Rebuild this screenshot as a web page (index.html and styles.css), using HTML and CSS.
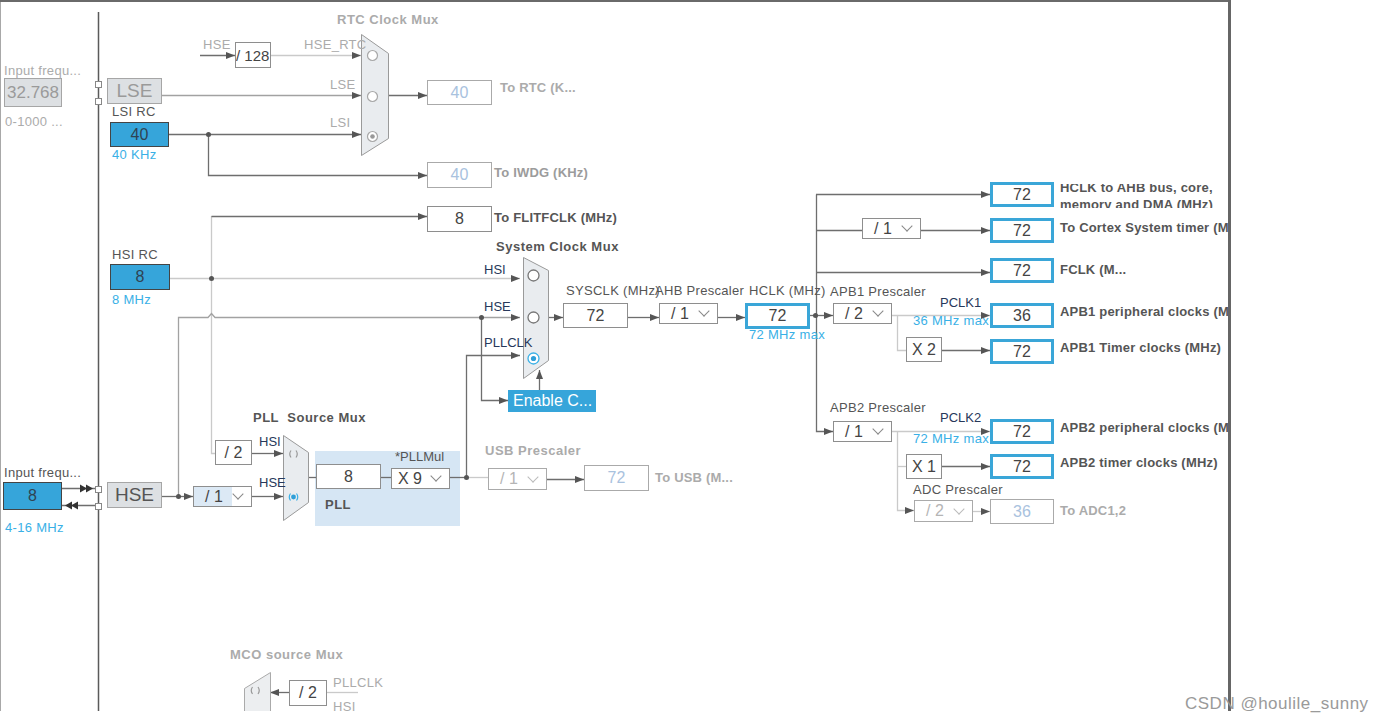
FILE: index.html
```html
<!DOCTYPE html>
<html>
<head>
<meta charset="utf-8">
<link rel="stylesheet" href="styles.css">
</head>
<body>
<div class="page">
  <div class="canvas">
    <svg class="wires" width="1228" height="711" viewBox="0 0 1228 711">
      <defs>
        <marker id="ar" markerWidth="9" markerHeight="8" refX="9" refY="4" orient="auto" markerUnits="userSpaceOnUse">
          <path d="M0,0.5 L9,4 L0,7.5z" fill="#555"/>
        </marker>
      </defs>
      <path class="vb" d="M98.5 12V711"/>
      <rect class="pllbg" x="315" y="451" width="145" height="75"/>
      <path class="w" d="M200 55.5H235" marker-end="url(#ar)"/>
      <path class="wl" d="M271 55.5H361" marker-end="url(#ar)"/>
      <path class="wm" d="M162 95.5H361" marker-end="url(#ar)"/>
      <path class="w" d="M169 134.5H361" marker-end="url(#ar)"/>
      <path class="w" d="M208.5 134.5V175.5H427" marker-end="url(#ar)"/>
      <path class="w" d="M388 95.5H427" marker-end="url(#ar)"/>
      <path class="wl" d="M170 278.5H520" marker-end="url(#ar)"/>
      <path class="wl" d="M211.5 216V453.5H215"/>
      <path class="w" d="M211.5 216.5H427" marker-end="url(#ar)"/>
      <path class="w" d="M252 453.5H283" marker-end="url(#ar)"/>
      <path class="w" d="M162 496.5H193" marker-end="url(#ar)"/>
      <path class="wm" d="M178.5 496V317.5H208 l3.5 -4 l3.5 4 H520" marker-end="url(#ar)"/>
      <path class="w" d="M481.5 317.5V400.5H508" marker-end="url(#ar)"/>
      <path class="w" d="M252 496.5H283" marker-end="url(#ar)"/>
      <path class="w" d="M308 477.5H316"/>
      <path class="w" d="M381 477.5H391"/>
      <path class="w" d="M450 477.5H466"/>
      <path class="wl" d="M466 477.5H488"/>
      <path class="w" d="M466.5 477V355.5H520" marker-end="url(#ar)"/>
      <path class="w" d="M539.5 390V370" marker-end="url(#ar)"/>
      <path class="w" d="M547 479.5H584" marker-end="url(#ar)"/>
      <path class="w" d="M548 317.5H563" marker-end="url(#ar)"/>
      <path class="w" d="M628 317.5H659" marker-end="url(#ar)"/>
      <path class="w" d="M718 317.5H745" marker-end="url(#ar)"/>
      <path class="w" d="M810 315.5H833" marker-end="url(#ar)"/>
      <path class="w" d="M816.5 194.5V431.5H833" marker-end="url(#ar)"/>
      <path class="w" d="M816 194.5H990" marker-end="url(#ar)"/>
      <path class="w" d="M816 230.5H862"/>
      <path class="w" d="M921 230.5H990" marker-end="url(#ar)"/>
      <path class="w" d="M816 272.5H990" marker-end="url(#ar)"/>
      <path class="wl" d="M892 315.5H990" marker-end="url(#ar)"/>
      <path class="wl" d="M897.5 315V350.5H906"/>
      <path class="w" d="M942 350.5H990" marker-end="url(#ar)"/>
      <path class="wl" d="M892 431.5H990" marker-end="url(#ar)"/>
      <path class="wl" d="M897.5 431V510.5H914" marker-end="url(#ar)"/>
      <path class="wl" d="M897 466.5H906"/>
      <path class="w" d="M942 466.5H990" marker-end="url(#ar)"/>
      <path class="wl" d="M973 511.5H990" marker-end="url(#ar)"/>
      <path class="w" d="M289 692.5H270" marker-end="url(#ar)"/>
      <path class="wl" d="M327 692.5H358"/>
      <path class="w" d="M62 488.5H98"/>
      <path class="w" d="M62 505.5H98"/>
      <path class="tri" d="M80 484.5L87 488.5L80 492.5zM86 484.5L93 488.5L86 492.5z"/>
      <path class="tri" d="M72 501.5L65 505.5L72 509.5zM78 501.5L71 505.5L78 509.5z"/>
      <circle class="dot" cx="208.5" cy="134.5" r="2.5"/>
      <circle class="dot" cx="211.5" cy="278.5" r="2.5"/>
      <circle class="dot" cx="178.5" cy="496.5" r="2.5"/>
      <circle class="dot" cx="481.5" cy="317.5" r="2.5"/>
      <circle class="dot" cx="466.5" cy="477.5" r="2.5"/>
      <circle class="dot" cx="815.5" cy="315.5" r="2.5"/>
      <rect class="sq" x="95.5" y="81.5" width="6" height="6"/>
      <rect class="sq" x="95.5" y="98.5" width="6" height="6"/>
      <rect class="sq" x="95.5" y="486.5" width="6" height="6"/>
      <rect class="sq" x="95.5" y="503.5" width="6" height="6"/>
      <polygon class="mux" points="361.5,34.5 388.5,53.5 388.5,138.5 361.5,155.5"/>
      <circle class="rad" cx="372.5" cy="55.5" r="5"/>
      <circle class="rad" cx="372.5" cy="96.5" r="5"/>
      <circle class="rad" cx="372.5" cy="136.5" r="5"/>
      <circle class="raddot" cx="372.5" cy="136.5" r="2.3"/>
      <polygon class="mux" points="523.5,257.5 548.5,270.5 548.5,360.5 523.5,378.5"/>
      <circle class="rad dk" cx="533.5" cy="275.5" r="5.5"/>
      <circle class="rad dk" cx="533.5" cy="317.5" r="5.5"/>
      <circle class="rad bl" cx="533.5" cy="358.5" r="5.5"/>
      <circle class="raddot bl" cx="533.5" cy="358.5" r="2.6"/>
      <polygon class="mux" points="283.5,435.5 308.5,452.5 308.5,502.5 283.5,520.5"/>
      <path class="paren" d="M291 450.5 q-2.5 3.5 0 7 M296 450.5 q2.5 3.5 0 7"/>
      <path class="paren bl" d="M290.5 493.5 q-2.5 3.5 0 7 M296.5 493.5 q2.5 3.5 0 7"/>
      <circle class="raddot bl" cx="293.5" cy="497" r="2.4"/>
      <polygon class="mux lt" points="244.5,688.5 270.5,672.5 270.5,720 244.5,720"/>
      <path class="paren" d="M252.5 687 q-2.5 3.5 0 7 M258 687 q2.5 3.5 0 7"/>
    </svg>

    <div class="lbl lt n-infreq1">Input frequ...</div>
    <div class="ibox gray n-lsein">32.768</div>
    <div class="lbl lt n-lserange">0-1000 ...</div>
    <div class="ibox gray big n-lse">LSE</div>
    <div class="lbl n-lsirc">LSI RC</div>
    <div class="ibox blue n-lsi">40</div>
    <div class="lbl bltxt n-lsikhz">40 KHz</div>
    <div class="lbl lt n-hsetop">HSE</div>
    <div class="box n-div128"><span>/ 128</span></div>
    <div class="lbl lt n-hsertc">HSE_RTC</div>
    <div class="lbl lt n-lsem">LSE</div>
    <div class="lbl lt n-lsim">LSI</div>
    <div class="lbl title lt n-rtcmux">RTC Clock Mux</div>
    <div class="box off n-rtcout">40</div>
    <div class="lbl b lt n-tortc">To RTC (K...</div>
    <div class="box off n-iwdg">40</div>
    <div class="lbl b lt2 n-toiwdg">To IWDG (KHz)</div>
    <div class="box n-flit">8</div>
    <div class="lbl b n-toflit">To FLITFCLK (MHz)</div>

    <div class="lbl n-hsirc">HSI RC</div>
    <div class="ibox blue n-hsi">8</div>
    <div class="lbl bltxt n-hsimhz">8 MHz</div>

    <div class="lbl title n-sysmux">System Clock Mux</div>
    <div class="lbl nv n-shsi">HSI</div>
    <div class="lbl nv n-shse">HSE</div>
    <div class="lbl nv n-spll">PLLCLK</div>
    <div class="enable n-enable">Enable C...</div>
    <div class="lbl n-sysclk">SYSCLK (MHz)</div>
    <div class="lbl n-ahbp">AHB Prescaler</div>
    <div class="lbl n-hclkl">HCLK (MHz)</div>
    <div class="box n-sysbox">72</div>
    <div class="sel n-ahbsel"><span>/ 1</span><i class="chev"></i></div>
    <div class="box out n-hclk">72</div>
    <div class="lbl bltxt n-hclkmax">72 MHz max</div>

    <div class="box out n-o1">72</div>
    <div class="twoline n-t1"><div>HCLK to AHB bus, core,</div><div>memory and DMA (MHz)</div></div>
    <div class="sel n-cortsel"><span>/ 1</span><i class="chev"></i></div>
    <div class="box out n-o2">72</div>
    <div class="lbl b n-t2">To Cortex System timer (MHz)</div>
    <div class="box out n-o3">72</div>
    <div class="lbl b n-t3">FCLK (M...</div>
    <div class="lbl n-apb1p">APB1 Prescaler</div>
    <div class="sel n-apb1sel"><span>/ 2</span><i class="chev"></i></div>
    <div class="lbl nv n-pclk1">PCLK1</div>
    <div class="lbl bltxt n-max36">36 MHz max</div>
    <div class="box out n-o4">36</div>
    <div class="lbl b n-t4">APB1 peripheral clocks (MHz)</div>
    <div class="box n-x2">X 2</div>
    <div class="box out n-o5">72</div>
    <div class="lbl b n-t5">APB1 Timer clocks (MHz)</div>

    <div class="lbl n-apb2p">APB2 Prescaler</div>
    <div class="sel n-apb2sel"><span>/ 1</span><i class="chev"></i></div>
    <div class="lbl nv n-pclk2">PCLK2</div>
    <div class="lbl bltxt n-max72">72 MHz max</div>
    <div class="box out n-o6">72</div>
    <div class="lbl b n-t6">APB2 peripheral clocks (MHz)</div>
    <div class="box n-x1">X 1</div>
    <div class="box out n-o7">72</div>
    <div class="lbl b n-t7">APB2 timer clocks (MHz)</div>
    <div class="lbl n-adcp">ADC Prescaler</div>
    <div class="sel off n-adcsel"><span>/ 2</span><i class="chev"></i></div>
    <div class="box off n-adcout">36</div>
    <div class="lbl b lt n-toadc">To ADC1,2</div>

    <div class="lbl n-infreq2">Input frequ...</div>
    <div class="ibox blue n-hsein">8</div>
    <div class="lbl bltxt n-hserange">4-16 MHz</div>
    <div class="ibox gray big dk n-hse">HSE</div>
    <div class="box n-div2">/ 2</div>
    <div class="sel tint n-hsediv"><span>/ 1</span><i class="chev"></i></div>
    <div class="lbl title n-pllmux">PLL&nbsp; Source Mux</div>
    <div class="lbl nv n-phsi">HSI</div>
    <div class="lbl nv n-phse">HSE</div>
    <div class="box n-pllbox">8</div>
    <div class="lbl n-pllmul">*PLLMul</div>
    <div class="sel n-x9"><span>X 9</span><i class="chev"></i></div>
    <div class="lbl title n-pll">PLL</div>

    <div class="lbl title lt n-usbp">USB Prescaler</div>
    <div class="sel off n-usbsel"><span>/ 1</span><i class="chev"></i></div>
    <div class="box off n-usbout">72</div>
    <div class="lbl b lt n-tousb">To USB (M...</div>

    <div class="lbl title lt n-mco">MCO source Mux</div>
    <div class="box n-mcodiv">/ 2</div>
    <div class="lbl lt n-mpll">PLLCLK</div>
    <div class="lbl lt n-mhsi">HSI</div>
  </div>
  <div class="watermark">CSDN @houlile_sunny</div>
</div>
</body>
</html>
```

FILE: styles.css
```css
html, body {
  margin: 0;
  padding: 0;
  background: #ffffff;
}
body {
  font-family: "Liberation Sans", Arial, sans-serif;
  color: #555;
}
.page {
  position: relative;
  width: 1384px;
  height: 723px;
}
.canvas {
  position: relative;
  width: 1228px;
  height: 711px;
  overflow: hidden;
  border-right: 3px solid #666;
  box-shadow: inset 0 2px 0 #6a6a6a, inset 1px 0 0 #a8a8a8;
  background: #fff;
}
.wires {
  position: absolute;
  left: 0;
  top: 0;
}
.vb { fill: none; stroke: #5a5a5a; stroke-width: 1.5; }
.w { fill: none; stroke: #6e6e6e; stroke-width: 1.3; }
.wm { fill: none; stroke: #a2a2a2; stroke-width: 1.3; }
.wl { fill: none; stroke: #cacaca; stroke-width: 1.3; }
.tri { fill: #333; }
.dot { fill: #555; }
.sq { fill: #fff; stroke: #888; stroke-width: 1; }
.pllbg { fill: #d6e6f4; }
.mux { fill: #e9ecef; stroke: #9a9a9a; stroke-width: 1; }
.mux.lt { fill: #eceef0; stroke: #aaa; }
.rad { fill: #fff; stroke: #a8a8a8; stroke-width: 1.2; }
.rad.dk { stroke: #777; stroke-width: 1.3; }
.rad.bl { stroke: #3ab0e6; stroke-width: 1.3; }
.raddot { fill: #999; }
.raddot.bl { fill: #2f9fd8; }
.paren { fill: none; stroke: #999; stroke-width: 1.2; }
.paren.bl { stroke: #3ab0e6; }

.lbl {
  position: absolute;
  font-size: 13px;
  line-height: 13px;
  white-space: nowrap;
  color: #555;
  letter-spacing: 0.3px;
}
.lbl.b { font-weight: bold; letter-spacing: 0.2px; }
.lbl.title { font-weight: bold; letter-spacing: 0.5px; }
.lbl.lt { color: #ababab; }
.lbl.lt2 { color: #9c9c9c; }
.lbl.nv { color: #27385a; letter-spacing: 0; }
.lbl.bltxt { color: #3ab0e6; }

.box, .ibox, .sel, .enable {
  position: absolute;
  box-sizing: border-box;
  display: flex;
  align-items: center;
  justify-content: center;
  font-size: 16px;
  white-space: nowrap;
  overflow: hidden;
}
.box {
  background: #fff;
  border: 1px solid #8e8e8e;
  color: #444;
}
.box.off {
  border-color: #aaa;
  color: #a9c2de;
}
.box.out {
  border: 3px solid #3aa6d8;
  color: #444;
}
.ibox.gray {
  background: #dde0e3;
  border: 1px solid #a6a6a6;
  color: #9a9a9a;
}
.ibox.big { font-size: 19px; }
.ibox.dk { color: #555; }
.ibox.blue {
  background: #36a5da;
  border: 1.5px solid #444;
  color: #2f4352;
}
.enable {
  background: #36a5da;
  color: #fff;
  justify-content: flex-start;
  padding-left: 5px;
}
.sel {
  background: #fff;
  border: 1px solid #8e8e8e;
  color: #444;
  justify-content: flex-start;
  padding-left: 11px;
}
.sel.off { border-color: #aaa; color: #b5b5b5; }
.sel.tint {
  background: linear-gradient(to right, #dce9f5 0, #dce9f5 38px, #fff 38px);
}
.chev {
  width: 8px;
  height: 8px;
  box-sizing: border-box;
  border-right: 1.4px solid #888;
  border-bottom: 1.4px solid #888;
  transform: rotate(45deg);
  margin-left: auto;
  margin-right: 9px;
  margin-top: -5px;
}
.sel.off .chev { border-color: #bbb; }

.twoline {
  position: absolute;
  overflow: hidden;
  font-size: 13px;
  font-weight: bold;
  line-height: 17px;
  color: #555;
  white-space: nowrap;
  letter-spacing: 0.2px;
}
.twoline div:first-child { margin-top: -5px; }

.watermark {
  position: absolute;
  left: 1185px;
  top: 694px;
  font-family: "Liberation Sans", Arial, sans-serif;
  font-size: 17px;
  letter-spacing: 0.5px;
  color: #9a9a9a;
  white-space: nowrap;
}

/* ---- node placement on the diagram canvas ---- */
.n-infreq1 { left: 4px; top: 64px; }
.n-lsein { left: 4px; top: 78px; width: 58px; height: 29px; font-size: 17px; }
.n-lserange { left: 5px; top: 115px; }
.n-lse { left: 107px; top: 78px; width: 55px; height: 26px; }
.n-lsirc { left: 112px; top: 105px; }
.n-lsi { left: 110px; top: 122px; width: 59px; height: 25px; }
.n-lsikhz { left: 112px; top: 148px; }
.n-hsetop { left: 203px; top: 38px; }
.n-div128 { left: 235px; top: 42px; width: 36px; height: 26px; justify-content: flex-start; font-size: 15px; padding-left: 0; }
.n-hsertc { left: 304px; top: 38px; }
.n-lsem { left: 330px; top: 78px; }
.n-lsim { left: 330px; top: 116px; }
.n-rtcmux { left: 337px; top: 13px; }
.n-rtcout { left: 427px; top: 80px; width: 65px; height: 25px; }
.n-tortc { left: 500px; top: 81px; }
.n-iwdg { left: 427px; top: 162px; width: 65px; height: 26px; }
.n-toiwdg { left: 494px; top: 166px; }
.n-flit { left: 427px; top: 206px; width: 65px; height: 26px; }
.n-toflit { left: 494px; top: 211px; }

.n-hsirc { left: 112px; top: 248px; }
.n-hsi { left: 110px; top: 264px; width: 60px; height: 26px; }
.n-hsimhz { left: 112px; top: 293px; }

.n-sysmux { left: 496px; top: 240px; }
.n-shsi { left: 484px; top: 263px; }
.n-shse { left: 484px; top: 300px; }
.n-spll { left: 484px; top: 336px; }
.n-enable { left: 508px; top: 390px; width: 88px; height: 22px; }
.n-sysclk { left: 566px; top: 284px; }
.n-ahbp { left: 655px; top: 284px; }
.n-hclkl { left: 749px; top: 284px; }
.n-sysbox { left: 563px; top: 303px; width: 65px; height: 25px; }
.n-ahbsel { left: 659px; top: 303px; width: 59px; height: 21px; }
.n-hclk { left: 745px; top: 303px; width: 65px; height: 26px; }
.n-hclkmax { left: 749px; top: 328px; }

.n-o1 { left: 990px; top: 182px; width: 64px; height: 25px; }
.n-t1 { left: 1060px; top: 184px; height: 24px; width: 200px; }
.n-cortsel { left: 862px; top: 218px; width: 59px; height: 21px; }
.n-o2 { left: 990px; top: 218px; width: 64px; height: 25px; }
.n-t2 { left: 1060px; top: 221px; }
.n-o3 { left: 990px; top: 258px; width: 64px; height: 25px; }
.n-t3 { left: 1060px; top: 263px; }
.n-apb1p { left: 830px; top: 285px; }
.n-apb1sel { left: 833px; top: 303px; width: 59px; height: 21px; }
.n-pclk1 { left: 940px; top: 296px; }
.n-max36 { left: 913px; top: 314px; }
.n-o4 { left: 990px; top: 303px; width: 64px; height: 25px; }
.n-t4 { left: 1060px; top: 305px; }
.n-x2 { left: 906px; top: 337px; width: 36px; height: 25px; }
.n-o5 { left: 990px; top: 339px; width: 64px; height: 25px; }
.n-t5 { left: 1060px; top: 341px; }

.n-apb2p { left: 830px; top: 401px; }
.n-apb2sel { left: 833px; top: 421px; width: 59px; height: 21px; }
.n-pclk2 { left: 940px; top: 411px; }
.n-max72 { left: 913px; top: 432px; }
.n-o6 { left: 990px; top: 419px; width: 64px; height: 25px; }
.n-t6 { left: 1060px; top: 421px; }
.n-x1 { left: 906px; top: 454px; width: 36px; height: 25px; }
.n-o7 { left: 990px; top: 454px; width: 64px; height: 25px; }
.n-t7 { left: 1060px; top: 456px; }
.n-adcp { left: 913px; top: 483px; }
.n-adcsel { left: 914px; top: 500px; width: 59px; height: 22px; }
.n-adcout { left: 990px; top: 499px; width: 64px; height: 25px; }
.n-toadc { left: 1060px; top: 504px; }

.n-infreq2 { left: 4px; top: 466px; }
.n-hsein { left: 3px; top: 482px; width: 59px; height: 28px; }
.n-hserange { left: 5px; top: 521px; }
.n-hse { left: 107px; top: 482px; width: 55px; height: 26px; }
.n-div2 { left: 215px; top: 440px; width: 37px; height: 25px; }
.n-hsediv { left: 193px; top: 486px; width: 59px; height: 21px; }
.n-pllmux { left: 253px; top: 411px; }
.n-phsi { left: 259px; top: 435px; }
.n-phse { left: 259px; top: 476px; }
.n-pllbox { left: 316px; top: 464px; width: 65px; height: 25px; }
.n-pllmul { left: 395px; top: 450px; letter-spacing: 0; }
.n-x9 { left: 391px; top: 468px; width: 59px; height: 21px; padding-left: 6px; }
.n-pll { left: 325px; top: 498px; }

.n-usbp { left: 485px; top: 444px; }
.n-usbsel { left: 488px; top: 468px; width: 59px; height: 22px; }
.n-usbout { left: 584px; top: 465px; width: 65px; height: 26px; }
.n-tousb { left: 655px; top: 471px; }

.n-mco { left: 230px; top: 648px; }
.n-mcodiv { left: 289px; top: 680px; width: 38px; height: 26px; }
.n-mpll { left: 333px; top: 676px; }
.n-mhsi { left: 333px; top: 700px; }
```
